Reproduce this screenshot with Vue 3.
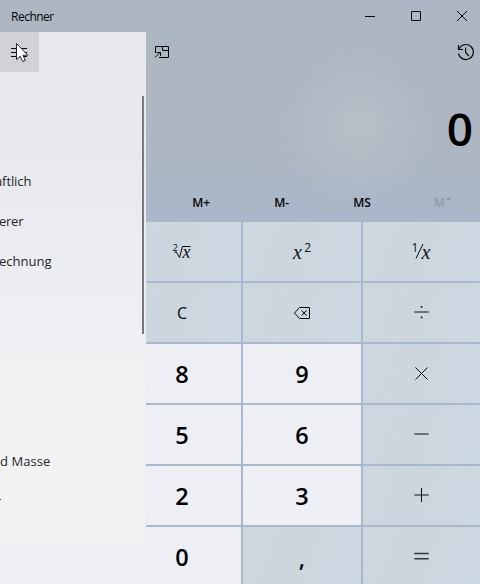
<script setup>
const modes = [
  { label: 'aftlich', top: 129, shift: -5, spacing: -0.1 },
  { label: 'erer', top: 169, shift: -1, spacing: -0.25 },
  { label: 'echnung', top: 209, shift: -1, spacing: 0 },
  { label: 'd Masse', top: 409, shift: 0, spacing: 0.05 }
]
const memory = ['M+', 'M-', 'MS']
const keys = [
  'root', 'square', 'inverse',
  'C', 'erase', 'divide',
  '8', '9', 'times',
  '5', '6', 'minus',
  '2', '3', 'plus',
  '0', ',', 'equals'
]
const isDigit = (k) => /^\d$/.test(k)
const icons = {
  erase: 'M-1.5 -4.5H8.5V6.5H-1.5L-6.5 1ZM.6 -1.6L5.6 3.6M5.6 -1.6L.6 3.6',
  times: 'M-5.5 -5.5L6.5 6.5M6.5 -5.5L-5.5 6.5'
}
</script>

<template>
  <main class="window">
    <header class="titlebar">
      <h1>Rechner</h1>
      <div class="controls">
        <svg viewBox="0 0 46 32"><path d="M18 16.5H28" /></svg>
        <svg viewBox="0 0 46 32"><path d="M18.5 11.5H27.5V20.5H18.5Z" /></svg>
        <svg viewBox="0 0 46 32"><path d="M18 11L28 21M28 11L18 21" /></svg>
      </div>
    </header>
    <div class="body">
      <aside class="menu">
        <button class="burger" aria-label="Menü">
          <svg viewBox="0 0 39 40">
            <path class="bars" d="M11 16.5H27M11 20.5H27M11 24.5H27" />
            <path class="cursor" d="M16.5 11.5V27.6L20.2 24.3L22.8 29.5L25.3 28.3L22.9 23.2H27.8Z" />
          </svg>
        </button>
        <nav>
          <span
            v-for="m in modes"
            :key="m.label"
            class="mode"
            :style="{ top: m.top + 'px', left: m.shift + 'px', letterSpacing: m.spacing + 'px' }"
          >{{ m.label }}</span>
          <i class="clipped"></i>
        </nav>
        <div class="scrollbar"></div>
      </aside>
      <section class="calc">
        <div class="toolbar">
          <svg class="pin" viewBox="0 0 16 16">
            <path d="M1.5 9V2.5H14.5V13.5H5M8.5 2.5V6.5H14.5M1 13.5L6 8.5M2.5 8.5H6.5V12" />
          </svg>
          <svg class="history" viewBox="0 0 18 18">
            <path d="M1.5 2V6.5H6M2 6A7.5 7.5 0 1 1 1.5 10.5M8.6 4.5V9.5L12 13" />
          </svg>
        </div>
        <output class="result">0</output>
        <div class="memory">
          <span v-for="m in memory" :key="m">{{ m }}</span>
          <span class="off">M<svg viewBox="0 0 5 3"><path d="M0 0H5L2.5 2.5Z" /></svg></span>
        </div>
        <div class="keys">
          <button v-for="k in keys" :key="k" class="key" :class="{ digit: isDigit(k), comma: k === ',', clear: k === 'C' }">
            <svg v-if="k === 'root'" viewBox="-20 -20 40 40">
              <text class="small" x="-8.5" y="0">2</text>
              <path d="M-6.5 1.5L-5 .5L-1.5 6.5L1.5 -4.5H9.5" />
              <text class="math" x="1.6" y="6.5" font-size="18">x</text>
            </svg>
            <svg v-else-if="k === 'square'" viewBox="-20 -20 40 40">
              <text class="math" x="-8" y="7.5" font-size="20">x</text>
              <text class="sup" x="3.2" y="1">2</text>
            </svg>
            <svg v-else-if="k === 'inverse'" viewBox="-20 -20 40 40">
              <text class="sup" x="-9.4" y="1">1</text>
              <path d="M-5 7.5L2 -7" />
              <text class="math" x=".6" y="7.5" font-size="20">x</text>
            </svg>
            <svg v-else-if="icons[k]" viewBox="-20 -20 40 40"><path :d="icons[k]" /></svg>
            <svg v-else-if="k === 'divide'" viewBox="-20 -20 40 40">
              <path class="bar" d="M-6.7 0H7.7" />
              <path class="dot" d="M-.3 -6h1.7v1.7h-1.7zM-.3 4.5h1.7v1.7h-1.7z" />
            </svg>
            <svg v-else-if="k === 'minus'" viewBox="-20 -20 40 40"><path class="bar" d="M-6.7 0H7.7" /></svg>
            <svg v-else-if="k === 'plus'" viewBox="-20 -20 40 40">
              <path class="bar" d="M-6.7 0H7.7" /><path d="M.5 -7V7" />
            </svg>
            <svg v-else-if="k === 'equals'" viewBox="-20 -20 40 40">
              <path class="double" d="M-6.7 -2.5H7.7M-6.7 2.7H7.7" />
            </svg>
            <template v-else>{{ k }}</template>
          </button>
        </div>
      </section>
    </div>
  </main>
</template>

<style>
body { margin: 0; overflow: hidden; }
</style>

<style scoped>
.window {
  width: 480px;
  height: 584px;
  overflow: hidden;
  display: flex;
  flex-direction: column;
  color: #050507;
  font-family: "Open Sans", "Noto Sans", sans-serif;
  background:
    radial-gradient(circle at 358px 125px, #b7c1c9 0, #b5bfc899 35px, #b1bac500 80px),
    linear-gradient(#adb6c2 0, #adb7c1 40px, #aeb5c1 80px, #acb7c2 160px, #a9b7ca 222px, #a9b9cf 370px, #aab7c5 584px);
}
svg { display: block; fill: none; stroke: #08080b; stroke-width: 1; overflow: visible; }
.titlebar { height: 32px; flex: none; display: flex; justify-content: space-between; }
h1 { margin: 0 0 0 11px; font-size: 12px; line-height: 33px; font-weight: 400; letter-spacing: -.5px; }
.controls { display: flex; margin-right: -5px; }
.controls svg { width: 46px; height: 32px; }
.body { flex: 1; display: flex; min-height: 0; }
.menu {
  position: relative;
  z-index: 1;
  width: 146px;
  flex: none;
  overflow: hidden;
  background: linear-gradient(#e6e8ed 0, #e8e9ed 120px, #eceef2 250px, #f2f2f3 380px, #f2f2f3 470px, #eeeff4 552px);
}
.menu::after { content: ""; position: absolute; inset: 0 0 0 auto; width: 1px; background: #e8eff5aa; }
.burger { display: block; width: 39px; height: 40px; padding: 0; border: 0; background: #d1d2d6; }
.burger svg { width: 39px; height: 40px; }
.cursor { fill: #fff; stroke: #22252a; }
.mode { position: absolute; height: 40px; line-height: 40px; font-size: 13px; white-space: nowrap; color: #24262b; }
.clipped { position: absolute; left: 0; top: 467px; width: 1px; height: 1px; background: #34373d; }
.scrollbar { position: absolute; left: 142px; top: 64px; width: 2px; height: 238px; background: #78797c; }
.calc { flex: 1; min-width: 0; display: flex; flex-direction: column; }
.calc > * { flex: none; }
.toolbar { height: 40px; display: flex; align-items: center; justify-content: space-between; padding: 0 5px 0 8px; }
.pin { width: 16px; height: 16px; }
.history { width: 18px; height: 18px; stroke-width: 1.15; }
.result { height: 112px; box-sizing: border-box; padding: 23px 7px 0 0; text-align: right; font-size: 46px; line-height: 66px; font-weight: 600; color: #000; }
.memory { height: 38px; display: grid; grid-template-columns: repeat(4, 80.4px); margin-left: 15px; }
.memory span { display: flex; justify-content: center; font-size: 12px; line-height: 37px; font-weight: 600; }
.memory .off { color: #8992a0; font-weight: 400; }
.memory .off svg { width: 5px; height: 3px; margin: 14px 0 0 1px; fill: #8992a0; stroke: none; }
.keys { display: grid; grid-template-columns: repeat(3, 118px); grid-auto-rows: 59px; gap: 2px; margin-left: -23px; }
.key {
  display: flex;
  align-items: center;
  justify-content: center;
  padding: 0;
  border: 0;
  font: 400 15px/24px "Open Sans", "Noto Sans", sans-serif;
  color: #08080b;
  background: linear-gradient(110deg, #cdd7e0, #cdd6df 45%, #ccd8e2);
}
.key.digit { font-size: 23.5px; font-weight: 600; color: #000; padding-top: 0; background: #edeff4; }
.key.comma { font-size: 23px; font-weight: 600; padding-top: 2px; }
.key.clear { font-size: 16px; padding-top: 0; }
.key svg { width: 40px; height: 40px; margin: 0 2px 1px 0; }
.key text { fill: #111318; stroke: none; }
.math { font-family: "Liberation Serif", serif; font-style: italic; }
.small { font-size: 9.5px; }
.sup { font-size: 12px; }
.bar { stroke: #69737d; stroke-width: 2; }
.dot { fill: #15181d; stroke: none; }
.double { stroke: #30353c; stroke-width: 1.4; }
</style>
